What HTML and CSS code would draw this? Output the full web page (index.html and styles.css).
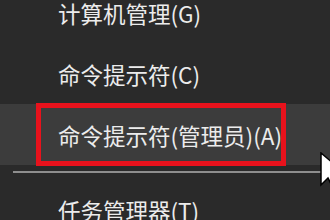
FILE: index.html
```html
<!DOCTYPE html>
<html lang="zh-CN">
<head>
  <meta charset="UTF-8" />
  <title>Win+X 菜单</title>
  <link rel="stylesheet" href="styles.css">
</head>
<body>
  <div class="menu">
    <div class="menu-item">计算机管理(G)</div>
    <div class="menu-item">命令提示符(C)</div>
    <div class="menu-item hover marked">命令提示符(管理员)(A)</div>
    <div class="separator"></div>
    <div class="menu-item">任务管理器(T)</div>
  </div>

  <svg class="cursor" width="14" height="40" viewBox="0 0 14 40">
    <path d="M1 1 L1 33 L8 26 L14 38 L14 12 Z" fill="#fff" stroke="#000" stroke-width="1.5" />
  </svg>
</body>
</html>
```

FILE: styles.css
```css
body {
  margin: 0;
  width: 330px;
  height: 220px;
  overflow: hidden;
  position: relative;
  background-color: #2a2a2a;
  font-family: "Noto Sans CJK SC", "Noto Sans", sans-serif;
  color: #ececec;
}

.menu {
  display: flex;
  flex-direction: column;
  margin-top: -18px;
}

.menu-item {
  height: 61px;
  display: flex;
  align-items: center;
  padding-left: 58px;
  font-size: 22.5px;
  position: relative;
}

.menu-item.hover {
  background-color: #3c3c3c;
}

.menu-item.marked::after {
  content: "";
  position: absolute;
  left: 36px;
  top: -1px;
  width: 240px;
  height: 53px;
  border: 5px solid #e8121c;
}

.separator {
  height: 14px;
  display: flex;
  align-items: center;
  padding-left: 13px;
}

.separator::before {
  content: "";
  flex: 1;
  border-top: 2px solid #8e8e8e;
}

.cursor {
  position: absolute;
  left: 320px;
  top: 152px;
}
```
